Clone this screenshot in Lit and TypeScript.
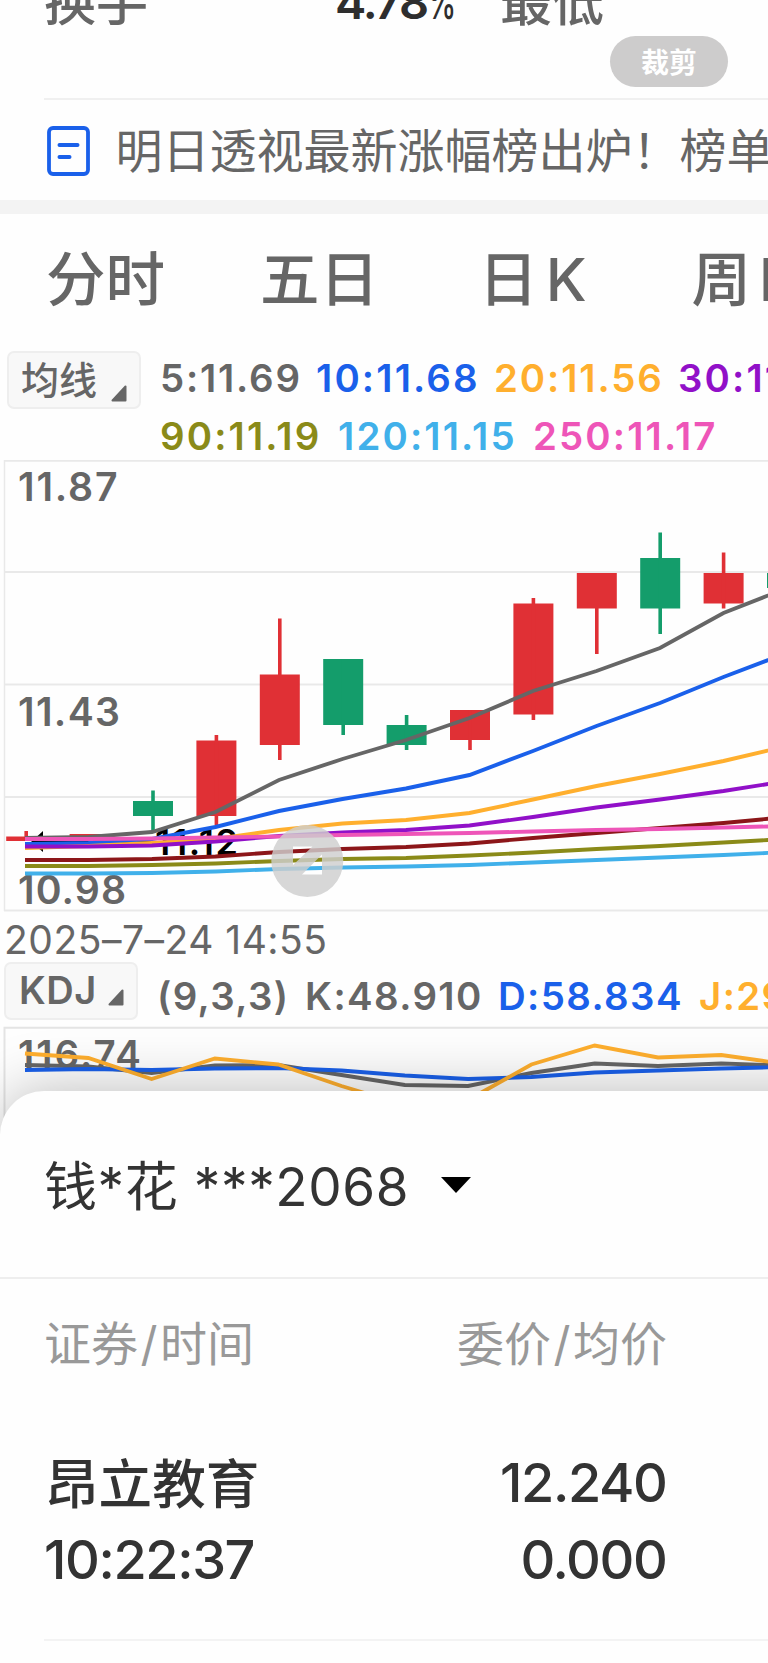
import { LitElement, html, svg, css } from "lit";
import { customElement } from "lit/decorators.js";

const RED = "#e03035";
const GREEN = "#149d6b";
const STEP = 63.4;

// [color, body top, body bottom, wick top, wick bottom]
const candles: [string, number, number, number, number][] = [
  [RED, 836.5, 841, 831, 841],
  [RED, 834, 837.5, 834, 837.5],
  [GREEN, 801, 816, 790.5, 832],
  [RED, 740.5, 816, 735, 827],
  [RED, 674.5, 745, 618.5, 760],
  [GREEN, 659, 725, 659, 735],
  [GREEN, 725, 745, 715, 750],
  [RED, 710, 740, 710, 750],
  [RED, 603.5, 714.5, 598, 720],
  [RED, 573, 608.5, 573, 654],
  [GREEN, 558, 608.5, 532.5, 634],
  [RED, 573, 603.5, 552.5, 608.5],
  [GREEN, 573, 588, 573, 588],
];

const averages: [string, number[]][] = [
  ["#666666", [838, 837, 832, 812, 780, 759, 740, 718, 691, 671, 648, 613, 588]],
  ["#1a60ea", [844, 843, 839, 827, 811, 799, 788.5, 775, 751, 726, 703, 677, 653]],
  ["#ffaf2e", [848, 846, 843, 839, 830, 823.5, 820, 813, 799.5, 786, 774, 761, 746]],
  ["#9110c8", [846.5, 846.5, 845.5, 841.5, 836, 832.5, 830, 825.5, 817, 807.5, 799.5, 791, 781]],
  ["#8c1619", [860, 860, 859, 856.5, 852, 849, 847, 843.5, 838, 833, 828, 823, 817]],
  ["#8a8a18", [866, 866, 865, 863.5, 861, 859, 858, 855.5, 852.5, 849, 846, 842.5, 839]],
  ["#40b0ea", [873.5, 873.5, 873, 871.5, 869, 867.5, 866.5, 865, 862.5, 860, 857.5, 855, 852]],
  ["#ee55b8", [839, 839, 838.5, 837.5, 836.5, 835, 834, 833, 831.5, 830, 829, 827.5, 826]],
];

const kdjLines: [string, number[]][] = [
  ["#666666", [1065, 1066.5, 1073, 1065.5, 1065, 1075, 1085, 1086, 1073, 1063.5, 1066, 1063.5, 1065.5]],
  ["#1a60ea", [1070, 1069, 1070, 1068.5, 1068, 1070.5, 1075.5, 1079, 1077, 1072.5, 1070.5, 1068.5, 1067]],
  ["#ffaf2e", [1053.5, 1058, 1079, 1058.5, 1064.5, 1086, 1105, 1100, 1064.5, 1045.5, 1057.5, 1055, 1064]],
];

const line = (x0: number, step: number) => ([color, ys]: [string, number[]]) => svg`
  <polyline fill="none" stroke=${color} stroke-width="3.9"
    points=${ys.map((y, i) => `${x0 + i * step},${y}`).join(" ")}></polyline>`;

@customElement("price-chart")
class PriceChart extends LitElement {
  static styles = css`
    :host { display: block; height: 452px; }
    svg { display: block; }
    text { font-family: Inter, sans-serif; font-weight: 600; font-size: 39.2px; fill: #666; }
    .low { fill: #000; font-size: 36px; }
  `;
  render() {
    return html`<svg width="768" height="452" viewBox="0 460 768 452">
      <g stroke="#e9e9e9" stroke-width="2">
        ${[460.8, 572, 684.6, 797, 910.5].map((y) => svg`<line x1="4" x2="768" y1=${y} y2=${y}></line>`)}
        <line x1="4.5" x2="4.5" y1="460" y2="911" stroke-width="1.5"></line>
      </g>
      <text x="18" y="500.8" textLength="99.5">11.87</text>
      <text x="18" y="726" textLength="102">11.43</text>
      <text x="18" y="904" textLength="108">10.98</text>
      ${candles.map(([c, t, b, wt, wb], i) => svg`
        <rect x=${6.2 + i * STEP} y=${t} width="40" height=${b - t} fill=${c}></rect>
        <rect x=${24.4 + i * STEP} y=${wt} width="3.6" height=${wb - wt} fill=${c}></rect>`)}
      <path d="M31 842L43 831V852Z"></path>
      <path d="M40 841.5H151" stroke="#000" stroke-width="3"></path>
      <text class="low" x="155" y="854.7" textLength="83">11.12</text>
      ${averages.map(line(25, STEP + 0.1))}
      <path fill="#cecece" fill-opacity=".82" fill-rule="evenodd"
        d="M271.3 861A36 36 0 1 1 343.3 861A36 36 0 1 1 271.3 861ZM293 846.5V865L312.5 846.5ZM322 874.5V854.5L302 874.5Z"></path>
    </svg>`;
  }
}

@customElement("kdj-chart")
class KdjChart extends LitElement {
  static styles = css`
    :host { display: block; }
    svg { display: block; }
    text { font-family: Inter, sans-serif; font-weight: 600; font-size: 38.5px; fill: #666; }
  `;
  render() {
    return html`<svg width="768" height="120" viewBox="0 1026 768 120">
      <path d="M4.5 1146V1027.7H768" fill="none" stroke="#e4e4e4" stroke-width="2"></path>
      <text x="18" y="1067.5" textLength="123">116.74</text>
      ${kdjLines.map(line(25, 63.3))}
    </svg>`;
  }
}

@customElement("app-root")
class AppRoot extends LitElement {
  static styles = css`
    :host {
      display: block; width: 768px; height: 1663px; overflow: hidden; position: relative;
      background: #fefefe; color: #666; font-family: Inter, "Noto Sans CJK SC", sans-serif;
      white-space: nowrap;
    }
    * { box-sizing: border-box; }
    .stats { height: 98px; display: grid; grid-template-columns: 291px 165px 1fr; padding-left: 44px; font-size: 52px; font-weight: 500; line-height: 60px; }
    .stats > span { margin-top: -27px; }
    .stats .num { margin-top: -32px; font-size: 47px; font-weight: 600; color: #2e2e2e; line-height: 67px; letter-spacing: -2px; }
    .stats .pct { display: inline-block; font-size: 46px; font-weight: 500; transform: scaleX(.64); transform-origin: 0 50%; }
    .crop { position: absolute; left: 610px; top: 35.5px; width: 118px; height: 51px; border-radius: 26px; background: #cdcccc; color: #fff; font: 700 28px/50px "Noto Sans CJK SC", sans-serif; text-align: center; }
    .news { height: 102px; margin-left: 43.5px; border-top: 2px solid #f0f0f0; display: flex; align-items: center; font: 400 47px/60px "Noto Sans CJK SC", sans-serif; padding: 0 0 4px 3px; }
    .news svg { width: 43px; height: 50px; flex: none; margin-right: 26px; margin-top: 6px; }
    .band { height: 14px; background: #f3f3f3; }
    .tabs { height: 138px; display: flex; padding: 29px 0 0 46px; font: 500 59.5px/72px Inter, "Noto Sans CJK SC", sans-serif; }
    .tabs span { flex: none; }
    .t1 { width: 214px; } .t2 { width: 218.5px; } .t3, .t4 { width: 213px; word-spacing: -8px; }
    .averages { height: 108px; display: flex; padding-left: 7px; }
    .chip { display: flex; align-items: flex-end; width: 134px; height: 58px; border: 2px solid #eee; border-radius: 7px; background: #f8f8f8; padding-left: 12px; font: 500 38px/54px Inter, "Noto Sans CJK SC", sans-serif; flex: none; margin-top: -1px; }
    .chip svg { width: 16px; height: 17px; margin: 0 0 5px 14px; }
    .rows { padding-left: 19px; font-size: 38.4px; font-weight: 600; line-height: 58px; margin-top: -3px; letter-spacing: 2.15px; }
    .row { display: flex; }
    .row span { flex: none; }
    .m5 { width: 156px; letter-spacing: 1.8px; }
    .m10, .m90 { width: 178px; color: #1a60ea; }
    .m20 { width: 184px; color: #ffaf2e; letter-spacing: 1.9px; }
    .m30 { color: #9110c8; }
    .m90 { color: #8a8a18; }
    .m120 { width: 195px; color: #40b0ea; }
    .m250 { color: #ee55b8; }
    .date { height: 51px; padding-left: 4px; font-size: 39px; line-height: 55px; letter-spacing: .5px; }
    .kdj { height: 63px; display: flex; padding-left: 4px; }
    .kdj .chip { width: 134px; margin-top: -1px; padding-left: 13px; line-height: 56px; letter-spacing: .6px; font-weight: 600; }
    .kdj .chip svg { margin: 0 0 12px 11px; }
    .values { display: flex; font-size: 38.4px; font-weight: 600; line-height: 66px; padding-left: 19px; letter-spacing: 1.4px; }
    .values span { flex: none; }
    .v1 { width: 148px; } .v2 { width: 193px; }
    .v3 { width: 201px; color: #1a60ea; } .v4 { color: #ffaf2e; }
    .sheet { position: absolute; left: 0; top: 1091px; width: 840px; height: 572px; background: #fefefe; border-radius: 44px 0 0 0; box-shadow: 0 0 60px rgba(0, 0, 0, .27); color: #333; }
    .account { height: 186px; display: flex; align-items: center; padding: 0 0 2px 44px; }
    .account .name { font-size: 53px; letter-spacing: .6px; }
    .account svg { width: 30px; height: 16px; margin: 3px 0 0 32px; }
    .cols { display: flex; justify-content: space-between; width: 668px; padding-left: 44px; }
    .head { border-top: 2px solid #eee; width: 768px; padding-right: 101px; height: 132px; line-height: 130px; font-size: 47px; color: #999; }
    .head i { font-style: normal; margin: 0 2.5px; }
    .order { height: 77px; line-height: 78px; font-size: 54px; font-weight: 500; letter-spacing: -1.4px; padding-right: 1.5px; }
    .first { margin-top: 35px; }
    .stock { font-size: 53.6px; letter-spacing: 0; padding: 2px 0 0 1px; }
    .end { height: 2px; background: #f3f3f3; margin: 41px 0 0 43.5px; }
  `;

  private corner = html`<svg viewBox="0 0 16 17"><path d="M14.5 1.5V15.5H1.5Z" fill="#666" stroke="#666" stroke-width="2" stroke-linejoin="round"></path></svg>`;

  render() {
    return html`
      <div class="stats"><span>换手</span><span class="num">4.78<span class="pct">%</span></span><span>最低</span></div>
      <div class="news">
        <svg viewBox="0 0 43 50"><rect x="2" y="2" width="39" height="46" rx="4" fill="none" stroke="#1a60ea" stroke-width="3.8"></rect><path d="M12.500 19H30.500M12.500 31H22.500" stroke="#1a60ea" stroke-width="4" stroke-linecap="round"></path></svg>
        <span>明日透视最新涨幅榜出炉！榜单</span>
      </div>
      <div class="band"></div>
      <div class="tabs"><span class="t1">分时</span><span class="t2">五日</span><span class="t3">日 K</span><span class="t4">周 K</span></div>
      <div class="averages">
        <div class="chip">均线${this.corner}</div>
        <div class="rows">
          <div class="row"><span class="m5">5:11.69</span><span class="m10">10:11.68</span><span class="m20">20:11.56</span><span class="m30">30:11.46</span></div>
          <div class="row"><span class="m90">90:11.19</span><span class="m120">120:11.15</span><span class="m250">250:11.17</span></div>
        </div>
      </div>
      <price-chart></price-chart>
      <div class="date">2025–7–24 14:55</div>
      <div class="kdj">
        <div class="chip">KDJ${this.corner}</div>
        <div class="values"><span class="v1">(9,3,3)</span><span class="v2">K:48.910</span><span class="v3">D:58.834</span><span class="v4">J:29.062</span></div>
      </div>
      <kdj-chart></kdj-chart>
      <div class="sheet">
        <div class="account"><span class="name">钱*花 ***2068</span><svg viewBox="0 0 30 16"><path d="M0 0H30L15 16Z" fill="#000"></path></svg></div>
        <div class="cols head"><span>证券<i>/</i>时间</span><span>委价<i>/</i>均价</span></div>
        <div class="cols order first"><span class="stock">昂立教育</span><span>12.240</span></div>
        <div class="cols order"><span>10:22:37</span><span>0.000</span></div>
        <div class="end"></div>
      </div>
      <div class="crop">裁剪</div>
    `;
  }
}
